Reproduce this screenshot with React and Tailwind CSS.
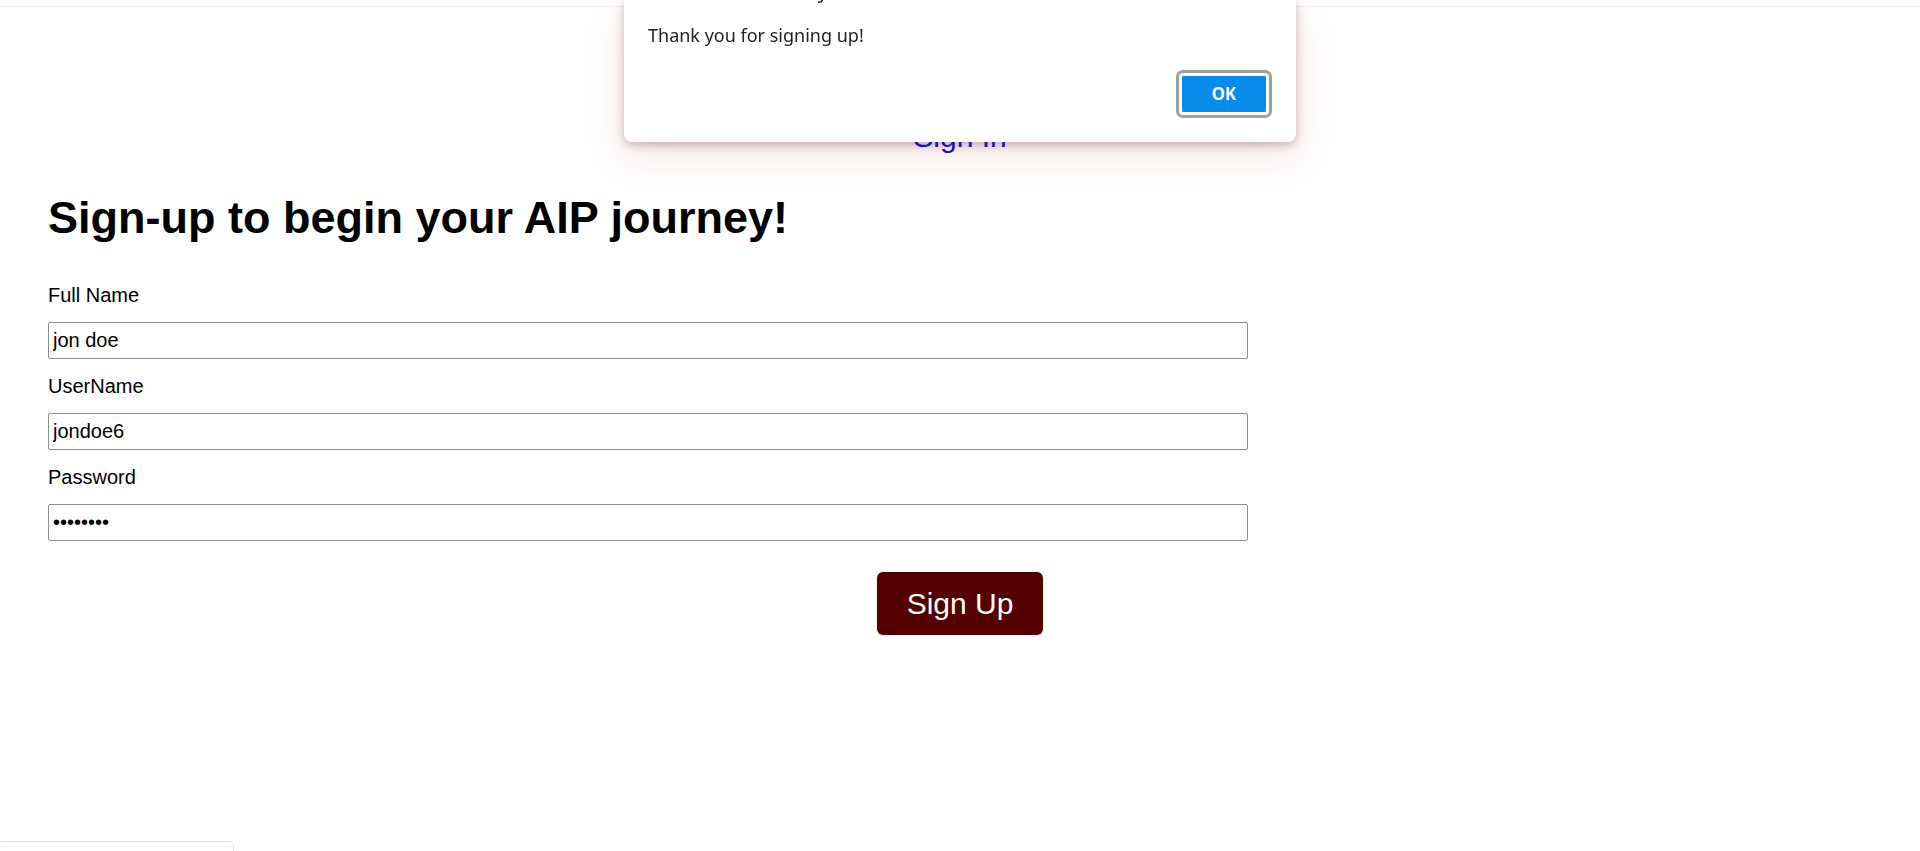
import React from 'react';

const Field = ({ label, type = 'text', value, first = false }) => (
    <div className={first ? '' : 'mt-4'}>
        <label className="block text-[20px] leading-[23px] text-black">{label}</label>
        <input
            type={type}
            defaultValue={value}
            readOnly
            className="mt-[15px] block w-[1200px] h-[37px] px-[4px] border border-[#8f8f8f] rounded-[2px] text-[20px] text-black bg-white outline-none"
        />
    </div>
);

const AlertDialog = () => (
    <div className="fixed top-0 left-1/2 -translate-x-1/2 w-[672px] bg-white rounded-b-[8px] pl-6 pr-[30px] pb-[30px] shadow-[0_3px_10px_rgba(60,30,30,0.3),0_14px_40px_rgba(210,90,90,0.16)] font-['Noto_Sans',sans-serif] z-50">
        {/* title sits mostly above the viewport */}
        <div className="-mt-[22px] text-[21px] leading-[24px] text-[#1f1f1f]">localhost:3000 says</div>
        <p className="mt-[21px] text-[18px] leading-[24px] text-[#1f1f1f]">Thank you for signing up!</p>
        <div className="mt-[29px] flex justify-end">
            <button className="w-[84px] h-[36px] bg-[#078cec] text-white text-[17px] font-bold outline-[3px] outline-solid outline-[#9f9f9f] outline-offset-[3px] rounded-[1px]">
                OK
            </button>
        </div>
    </div>
);

export default function App() {
    return (
        <div className="relative min-h-screen bg-white font-['Liberation_Sans',Arial,sans-serif] overflow-hidden">
            {/* Top nav */}
            <div className="h-[7px] border-b border-[#efefef]" />

            <div className="mt-[112px] text-center">
                <a href="#" className="text-[30px] leading-[35px] text-[#0000ee]">Sign In</a>
            </div>

            <main className="px-12">
                <h1 className="mt-[38px] text-[45px] leading-[51px] font-bold text-black">Sign-up to begin your AIP journey!</h1>

                <form className="mt-[41px]" onSubmit={e => e.preventDefault()}>
                    <Field label="Full Name" value="jon doe" first />
                    <Field label="UserName" value="jondoe6" />
                    <Field label="Password" type="password" value="password" />

                    <div className="mt-[31px] flex justify-center">
                        <button className="bg-[#550000] text-white text-[30px] leading-[35px] px-[30px] py-[14px] rounded-[6px]">
                            Sign Up
                        </button>
                    </div>
                </form>
            </main>

            <AlertDialog />

            {/* floating widget peeking at bottom-left */}
            <div className="fixed -left-[2px] -bottom-[20px] w-[236px] h-[30px] border border-[#efdfe3] rounded-[5px] bg-white" />
        </div>
    );
}
